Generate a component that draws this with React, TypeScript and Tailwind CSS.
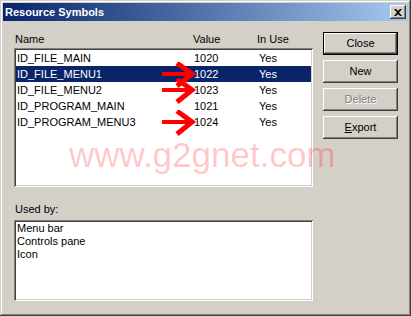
import React from 'react'

const rows = [
  { name: 'ID_FILE_MAIN', value: '1020', used: 'Yes', arrow: false },
  { name: 'ID_FILE_MENU1', value: '1022', used: 'Yes', arrow: true, selected: true },
  { name: 'ID_FILE_MENU2', value: '1023', used: 'Yes', arrow: true },
  { name: 'ID_PROGRAM_MAIN', value: '1021', used: 'Yes', arrow: false },
  { name: 'ID_PROGRAM_MENU3', value: '1024', used: 'Yes', arrow: true },
]

const usedBy = ['Menu bar', 'Controls pane', 'Icon']

const raised =
  'shadow-[inset_-1px_-1px_#404040,inset_1px_1px_#ffffff,inset_-2px_-2px_#808080,inset_2px_2px_#d4d0c8]'
const sunken =
  'shadow-[inset_1px_1px_#808080,inset_-1px_-1px_#ffffff,inset_2px_2px_#404040,inset_-2px_-2px_#d4d0c8]'

function Arrow() {
  return (
    <svg className="absolute left-[146px] top-[-4px]" width="34" height="26" viewBox="0 0 34 26">
      <line x1="0" y1="12" x2="30" y2="12" stroke="#ff0000" strokeWidth="4" />
      <polyline points="15,1 30,12 15,24" fill="none" stroke="#ff0000" strokeWidth="5" strokeLinejoin="miter" />
    </svg>
  )
}

function Button({ label, isDefault, disabled, underline }: { label: string; isDefault?: boolean; disabled?: boolean; underline?: boolean }) {
  return (
    <div className={`h-[23px] w-[75px] flex items-center justify-center ${isDefault ? 'border border-black' : ''}`}>
      <div className={`w-full h-full flex items-center justify-center ${raised}`}>
        {disabled ? (
          <span className="text-[#808080] [text-shadow:1px_1px_0_#ffffff]">{label}</span>
        ) : underline ? (
          <span>
            <span className="underline">{label[0]}</span>
            {label.slice(1)}
          </span>
        ) : (
          <span>{label}</span>
        )}
      </div>
    </div>
  )
}

export default function App() {
  return (
    <div
      className={`relative w-[411px] h-[316px] bg-[#d4d0c8] p-[3px] text-[11px] text-black overflow-hidden shadow-[inset_-1px_-1px_#404040,inset_1px_1px_#d4d0c8,inset_-2px_-2px_#808080,inset_2px_2px_#ffffff]`}
      style={{ fontFamily: '"Liberation Sans", Arial, sans-serif' }}
    >
      {/* title bar */}
      <div className="h-[18px] flex items-center justify-between bg-gradient-to-r from-[#0a246a] to-[#a6caf0] pl-[2px] pr-[2px]">
        <span className="text-white font-bold text-[11px] leading-none">Resource Symbols</span>
        <div className={`w-[16px] h-[14px] bg-[#d4d0c8] flex items-center justify-center ${raised}`}>
          <svg width="8" height="7" viewBox="0 0 8 7">
            <path d="M0 0 L2 0 L4 2 L6 0 L8 0 L5 3.5 L8 7 L6 7 L4 5 L2 7 L0 7 L3 3.5 Z" fill="#000" />
          </svg>
        </div>
      </div>

      <div className="flex pl-[11px]">
        {/* left column */}
        <div className="w-[299px] flex flex-col">
          <div className="relative h-[14px] mt-[11px] leading-[14px]">
            <span className="absolute left-[1px]">Name</span>
            <span className="absolute left-[179px]">Value</span>
            <span className="absolute left-[243px]">In Use</span>
          </div>
          <div className={`mt-[2px] h-[139px] bg-white p-[2px] ${sunken}`}>
            {rows.map(r => (
              <div
                key={r.name}
                className={`relative h-[16px] leading-[16px] ${r.selected ? 'bg-[#0a246a] text-white' : ''}`}
              >
                <span className="absolute left-[1px]">{r.name}</span>
                {r.arrow && <Arrow />}
                <span className="absolute left-[178px]">{r.value}</span>
                <span className="absolute left-[243px]">{r.used}</span>
              </div>
            ))}
          </div>
          <div className="h-[14px] leading-[14px] mt-[15px] pl-[1px]">Used by:</div>
          <div className={`mt-[4px] h-[81px] bg-white px-[3px] py-[2px] ${sunken}`}>
            {usedBy.map(u => (
              <div key={u} className="h-[13px] leading-[13px]">
                {u}
              </div>
            ))}
          </div>
        </div>

        {/* right column */}
        <div className="ml-[10px] pt-[11px] flex flex-col gap-[5px]">
          <Button label="Close" isDefault />
          <Button label="New" />
          <Button label="Delete" disabled />
          <Button label="Export" underline />
        </div>
      </div>

      {/* watermark */}
      <div className="absolute left-[69px] top-[137px] text-[35px] leading-none text-[rgba(255,0,0,0.22)] pointer-events-none whitespace-nowrap">
        www.g2gnet.com
      </div>
    </div>
  )
}
